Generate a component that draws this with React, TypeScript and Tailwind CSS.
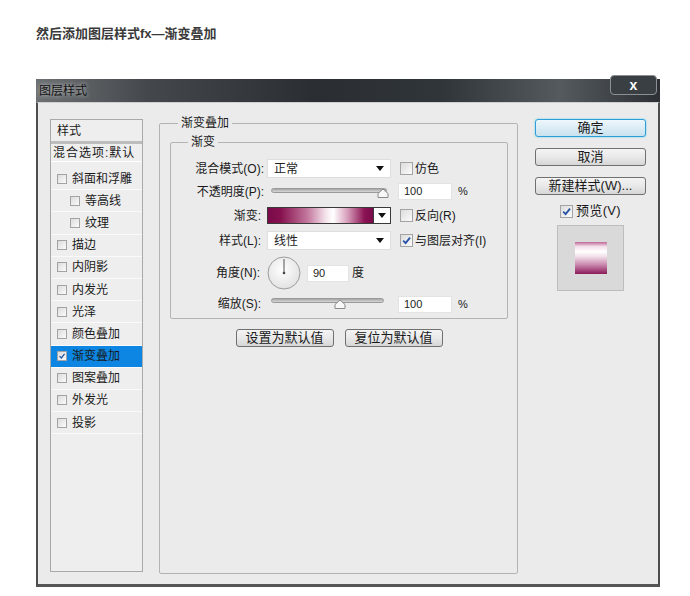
const styles = [
  { name: "斜面和浮雕", indent: false },
  { name: "等高线", indent: true },
  { name: "纹理", indent: true },
  { name: "描边", indent: false },
  { name: "内阴影", indent: false },
  { name: "内发光", indent: false },
  { name: "光泽", indent: false },
  { name: "颜色叠加", indent: false },
  { name: "渐变叠加", indent: false, active: true },
  { name: "图案叠加", indent: false },
  { name: "外发光", indent: false },
  { name: "投影", indent: false },
]

function Box({ checked = false, size = "sm" }: { checked?: boolean; size?: "sm" | "md" }) {
  const dim = size === "sm" ? "w-[10px] h-[10px]" : "w-[13px] h-[13px]"
  return (
    <span
      className={`${dim} shrink-0 inline-flex items-center justify-center border border-[#a3a3a3] bg-gradient-to-br from-[#dcdcdc] to-[#fbfbfb]`}
    >
      {checked && (
        <svg viewBox="0 0 10 10" className="w-full h-full">
          <path d="M2 5.2 L4.2 7.4 L8.2 2.4" fill="none" stroke="#2552a8" strokeWidth="1.6" />
        </svg>
      )}
    </span>
  )
}

function Arrow() {
  return (
    <svg width="8" height="5" viewBox="0 0 8 5">
      <path d="M0 0 H8 L4 5 Z" fill="#111" />
    </svg>
  )
}

function Select({ value }: { value: string }) {
  return (
    <div className="w-[124px] h-[19px] bg-white border border-[#dedede] flex items-center justify-between pl-[6px] pr-[6px] text-[12px] text-[#222]">
      <span>{value}</span>
      <Arrow />
    </div>
  )
}

function Slider({ width, thumb, track, knob }: { width: number; thumb: number; track: string; knob: string }) {
  return (
    <div className={`relative h-[16px] ${width === 116 ? "w-[116px]" : "w-[113px]"}`}>
      <div className={`absolute left-0 right-0 h-[5px] rounded-full border border-[#999] bg-gradient-to-b from-[#a6a6a6] to-[#d8d8d8] ${track}`} />
      <svg
        width="12"
        height="10"
        viewBox="0 0 12 10"
        className={`absolute ${knob}`}
        style={{ left: thumb - 6 }}
      >
        <path d="M1 9.5 V5.5 L6 1 L11 5.5 V9.5 Z" fill="#f7f7f7" stroke="#8a8a8a" strokeWidth="1" />
      </svg>
    </div>
  )
}

function Field({ value, w }: { value: string; w: string }) {
  return (
    <div className={`${w} h-[17px] bg-white border border-[#e3e3e3] flex items-center pl-[5px] text-[11px] text-[#222]`}>
      {value}
    </div>
  )
}

function Btn({ label, primary = false, w }: { label: string; primary?: boolean; w: string }) {
  return (
    <div
      className={`${w} h-[18px] rounded-[3px] flex items-center justify-center text-[13px] text-[#1a1a1a] ${
        primary
          ? "border border-[#2c9fd6] shadow-[0_0_2px_#5ec8f3] bg-gradient-to-b from-[#eef7fc] to-[#c9e2ee]"
          : "border border-[#707070] bg-gradient-to-b from-[#f4f4f4] via-[#e9e9e9] to-[#d6d6d6]"
      }`}
    >
      {label}
    </div>
  )
}

export default function App() {
  return (
    <div className="w-[690px] h-[596px] bg-white font-['Liberation_Sans','Noto_Sans_CJK_SC',sans-serif] text-[#1a1a1a] overflow-hidden">
      <div className="pt-[26px] pl-[36px] h-[41px] text-[13px] leading-[15px] font-bold text-[#3a3a3a]">
        然后添加图层样式fx—渐变叠加
      </div>

      <div className="mt-[38px] ml-[36px] w-[624px]">
        {/* title bar */}
        <div className="relative h-[23px] flex items-center pl-[3px] bg-[linear-gradient(90deg,#6d7174_0%,#44484c_18%,#2a2e32_45%,#30353a_65%,#555a5f_84%,#2c3034_100%)]">
          <span className="text-[12px] text-[#111] [text-shadow:0_0_4px_#d8d8d8]">图层样式</span>
          <div className="absolute right-[3px] top-[-4px] w-[47px] h-[20px] rounded-[4px] border border-[#8c9094] bg-[#3a3f43] flex items-center justify-center text-[14px] font-bold text-white leading-none">
            x
          </div>
        </div>

        {/* body */}
        <div className="h-[485px] flex items-start bg-[#ebebeb] border-x-2 border-b-[3px] border-t border-t-[#cfcfcf] border-x-[#4d4d4d] border-b-[#555]">
          {/* styles list */}
          <div className="ml-[12px] mt-[16px] w-[93px] h-[453px] border border-[#a9a9a9] bg-[#eeeeee] text-[12px]">
            <div className="h-[21px] flex items-center pl-[6px]">样式</div>
            <div className="h-[3px] bg-[#bdbdbd]" />
            <div className="h-[18px] flex items-center pl-[2px] border-b border-white tracking-[1px]">混合选项:默认</div>
            <div className="h-[6px]" />
            {styles.map((s) => (
              <div
                key={s.name}
                className={`h-[22.2px] flex items-center gap-[5px] border-b border-[#fafafa] ${
                  s.indent ? "pl-[19px]" : "pl-[6px]"
                } ${s.active ? "bg-[#0c86e2]" : ""}`}
              >
                <Box checked={s.active} />
                <span>{s.name}</span>
              </div>
            ))}
          </div>

          {/* gradient overlay group */}
          <fieldset className="ml-[16px] mt-[13px] w-[359px] h-[458px] border border-[#b3b3b3] rounded-[2px] p-0 text-[12px]">
            <legend className="ml-[18px] px-[3px] leading-[14px]">渐变叠加</legend>
            <div className="pl-[10px] pr-[9px] pt-[5px]">
              <fieldset className="h-[184px] border border-[#b3b3b3] rounded-[2px] p-0">
                <legend className="ml-[17px] px-[3px] leading-[14px]">渐变</legend>
                <div className="pt-[10px] flex flex-col">
                  <div className="flex items-center h-[19px]">
                    <span className="w-[93px] text-right">混合模式(O):</span>
                    <div className="ml-[3px]">
                      <Select value="正常" />
                    </div>
                    <div className="ml-[9px] flex items-center gap-[2px]">
                      <Box size="md" />
                      <span>仿色</span>
                    </div>
                  </div>

                  <div className="mt-[5px] flex items-center h-[17px]">
                    <span className="w-[93px] text-right">不透明度(P):</span>
                    <div className="ml-[7px]">
                      <Slider width={116} thumb={112} track="top-[4px]" knob="top-[4px]" />
                    </div>
                    <div className="ml-[11px]">
                      <Field value="100" w="w-[54px]" />
                    </div>
                    <span className="ml-[6px] text-[11px]">%</span>
                  </div>

                  <div className="mt-[7px] flex items-center h-[17px]">
                    <span className="w-[93px] text-right pr-[3px]">渐变:</span>
                    <div className="ml-[3px] flex w-[124px] h-[17px] border border-[#3a3a3a]">
                      <div className="flex-1 bg-[linear-gradient(90deg,#7a0a4a_0%,#86114f_12%,#c47a9f_38%,#f4e4ec_55%,#ffffff_62%,#d69cba_76%,#8a1253_92%,#7a0a4a_100%)]" />
                      <div className="w-[17px] border-l border-[#3a3a3a] bg-white flex items-center justify-center">
                        <Arrow />
                      </div>
                    </div>
                    <div className="ml-[9px] flex items-center gap-[2px]">
                      <Box size="md" />
                      <span>反向(R)</span>
                    </div>
                  </div>

                  <div className="mt-[7px] flex items-center h-[19px]">
                    <span className="w-[93px] text-right pr-[3px]">样式(L):</span>
                    <div className="ml-[3px]">
                      <Select value="线性" />
                    </div>
                    <div className="ml-[9px] flex items-center gap-[2px]">
                      <Box size="md" checked />
                      <span>与图层对齐(I)</span>
                    </div>
                  </div>

                  <div className="mt-[6px] flex items-center h-[34px]">
                    <span className="w-[93px] text-right pr-[4px]">角度(N):</span>
                    <svg width="34" height="34" viewBox="0 0 34 34" className="ml-[3px]">
                      <defs>
                        <radialGradient id="dial" cx="45%" cy="40%" r="60%">
                          <stop offset="0%" stopColor="#ffffff" />
                          <stop offset="100%" stopColor="#e2e2e2" />
                        </radialGradient>
                      </defs>
                      <circle cx="17" cy="17" r="16" fill="url(#dial)" stroke="#9c9c9c" />
                      <line x1="17" y1="17" x2="17" y2="3" stroke="#555" strokeWidth="1" />
                      <circle cx="17" cy="17" r="1.3" fill="#444" />
                    </svg>
                    <div className="ml-[6px]">
                      <Field value="90" w="w-[42px]" />
                    </div>
                    <span className="ml-[3px]">度</span>
                  </div>

                  <div className="mt-[6px] flex items-center h-[16px]">
                    <span className="w-[93px] text-right pr-[3px]">缩放(S):</span>
                    <div className="ml-[7px]">
                      <Slider width={113} thumb={69} track="top-[2px]" knob="top-[3px]" />
                    </div>
                    <div className="ml-[14px]">
                      <Field value="100" w="w-[54px]" />
                    </div>
                    <span className="ml-[6px] text-[11px]">%</span>
                  </div>
                </div>
              </fieldset>
              <div className="mt-[10px] flex justify-center gap-[11px]">
                <Btn label="设置为默认值" w="w-[98px]" />
                <Btn label="复位为默认值" w="w-[98px]" />
              </div>
            </div>
          </fieldset>

          {/* right column */}
          <div className="ml-[17px] mt-[16px] w-[111px] flex flex-col items-center">
            <Btn label="确定" primary w="w-[111px]" />
            <div className="mt-[11px]">
              <Btn label="取消" w="w-[111px]" />
            </div>
            <div className="mt-[11px]">
              <Btn label="新建样式(W)..." w="w-[111px]" />
            </div>
            <div className="mt-[9px] flex items-center gap-[3px] text-[13px] h-[14px]">
              <Box size="md" checked />
              <span className="tracking-[0.3px]">预览(V)</span>
            </div>
            <div className="mt-[7px] w-[67px] h-[66px] border border-[#bdbdbd] bg-[#d9d9d9] flex items-center justify-center">
              <div className="w-[32px] h-[32px] bg-[linear-gradient(180deg,#c0679a_0%,#f3dfe9_14%,#ffffff_30%,#f1e0ea_45%,#c885ab_72%,#8a1a59_100%)]" />
            </div>
          </div>
        </div>
      </div>
    </div>
  )
}
